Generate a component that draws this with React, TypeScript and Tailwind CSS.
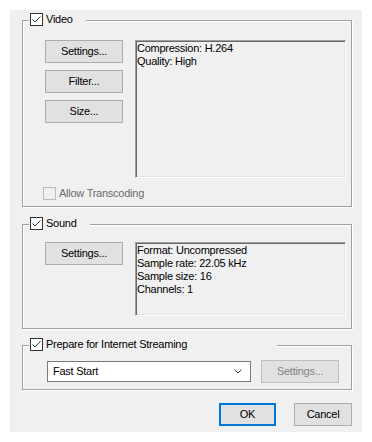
import React from "react";

function Check({ checked = true, disabled = false }: { checked?: boolean; disabled?: boolean }) {
  return (
    <span
      className={
        "flex h-[13px] w-[13px] shrink-0 items-center justify-center border " +
        (disabled ? "border-[#bcbcbc] bg-[#f0f0f0]" : "border-[#333333] bg-white")
      }
    >
      {checked && (
        <svg width="11" height="11" viewBox="0 0 11 11">
          <path d="M1.5 5.5 L4 8 L9.5 2.5" fill="none" stroke="#333333" strokeWidth="1" />
        </svg>
      )}
    </span>
  );
}

function Group({
  label,
  labelClass,
  className,
  children,
}: {
  label: string;
  labelClass: string;
  className: string;
  children: React.ReactNode;
}) {
  return (
    <div className={"relative border border-[#a0a0a0] shadow-[inset_1px_1px_0_#fff,1px_1px_0_#fff] " + className}>
      <div className={"absolute left-[6px] top-[-8px] flex items-center gap-[3px] bg-[#f0f0f0] pl-[1px] " + labelClass}>
        <Check />
        <span className="leading-[13px]">{label}</span>
      </div>
      {children}
    </div>
  );
}

function Btn({ children, className = "" }: { children: React.ReactNode; className?: string }) {
  return (
    <div className={"flex h-[23px] items-center justify-center border border-[#adadad] bg-[#e1e1e1] " + className}>
      {children}
    </div>
  );
}

function InfoBox({ lines, className }: { lines: string[]; className: string }) {
  return (
    <div
      className={
        "border border-t-[#a0a0a0] border-l-[#a0a0a0] border-r-white border-b-white shadow-[inset_1px_1px_0_#696969,inset_-1px_-1px_0_#e3e3e3] pl-[1px] pt-[1px] leading-[13px] " +
        className
      }
    >
      {lines.map((l) => (
        <div key={l}>{l}</div>
      ))}
    </div>
  );
}

export default function App() {
  return (
    <div
      className="h-[442px] w-[372px] bg-white p-[10px] text-[11px] tracking-[-0.25px] text-black"
      style={{ fontFamily: '"Liberation Sans", Arial, sans-serif' }}
    >
      <div className="flex h-[422px] w-[352px] flex-col bg-[#f0f0f0] pl-[12px] pr-[10px] pt-[10px]">
        <Group label="Video" labelClass="w-[57px]" className="h-[187px] pl-[22px] pt-[19px]">
          <div className="flex">
            <div className="flex w-[78px] flex-col gap-[7px]">
              <Btn>Settings...</Btn>
              <Btn>Filter...</Btn>
              <Btn>Size...</Btn>
            </div>
            <InfoBox className="ml-[12px] h-[138px] w-[211px]" lines={["Compression: H.264", "Quality: High"]} />
          </div>
          <div className="ml-[-2px] mt-[9px] flex items-center gap-[3px]">
            <Check checked={false} disabled />
            <span className="leading-[13px] text-[#6d6d6d]">Allow Transcoding</span>
          </div>
        </Group>

        <Group label="Sound" labelClass="w-[61px]" className="mt-[17px] h-[105px] pl-[22px] pt-[17px]">
          <div className="flex">
            <div className="w-[78px]">
              <Btn>Settings...</Btn>
            </div>
            <InfoBox
              className="ml-[12px] h-[74px] w-[211px]"
              lines={["Format: Uncompressed", "Sample rate: 22.05 kHz", "Sample size: 16", "Channels: 1"]}
            />
          </div>
        </Group>

        <Group
          label="Prepare for Internet Streaming"
          labelClass="w-[248px]"
          className="mt-[16px] h-[45px] pl-[24px] pt-[14px]"
        >
          <div className="flex items-center">
            <div className="flex h-[21px] w-[204px] items-center justify-between border border-[#7a7a7a] bg-white pl-[5px] pr-[8px]">
              <span>Fast Start</span>
              <svg width="8" height="5" viewBox="0 0 8 5">
                <path d="M0.5 0.5 L4 4 L7.5 0.5" fill="none" stroke="#333333" strokeWidth="1" />
              </svg>
            </div>
            <Btn className="ml-[10px] w-[78px] border-[#bfbfbf] bg-[#cccccc] text-[#838383]">Settings...</Btn>
          </div>
        </Group>

        <div className="mt-[13px] flex justify-end gap-[18px]">
          <div className="flex h-[23px] w-[57px] items-center justify-center border-2 border-[#0078d7] bg-[#e1e1e1]">
            OK
          </div>
          <Btn className="w-[58px]">Cancel</Btn>
        </div>
      </div>
    </div>
  );
}
